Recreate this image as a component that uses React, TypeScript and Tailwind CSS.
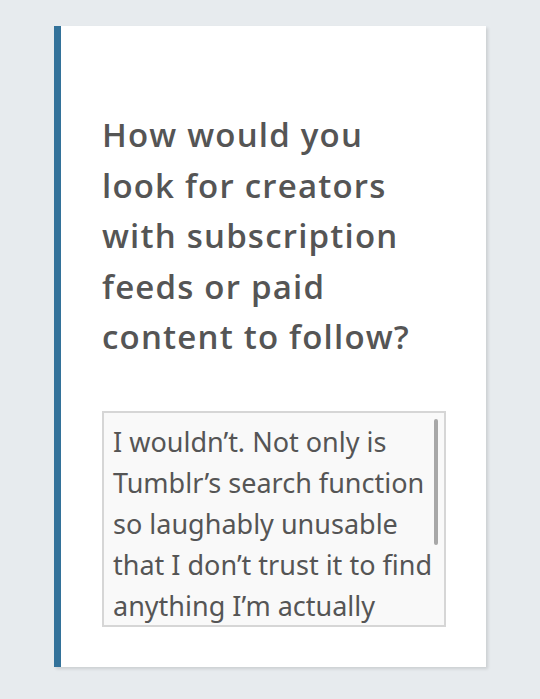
import React from 'react';

const answer =
  'I wouldn’t. Not only is Tumblr’s search function so laughably unusable that I don’t trust it to find anything I’m actually looking for, but I also have no interest in paying for content on a site like this.';

const App: React.FC = () => {
  return (
    <div className="min-h-[699px] w-[540px] bg-[#e7ebee] pt-[26px]">
      {/* Question card */}
      <div className="ml-[54px] h-[641px] w-[432px] border-l-[7px] border-[#33729a] bg-white pl-[41px] pr-[16px] pt-[84px] shadow-[2px_2px_3px_rgba(0,0,0,0.12)]">
        <h2 className="font-['Open_Sans',sans-serif] text-[33px] font-semibold leading-[50.5px] tracking-[1.2px] text-[#555]">
          How would you
          <br />
          look for creators
          <br />
          with subscription
          <br />
          feeds or paid
          <br />
          content to follow?
        </h2>

        {/* Answer box, scrolled to the top */}
        <div className="relative mt-[48px] h-[216px] w-[344px] overflow-hidden border-2 border-[#d6d6d6] bg-[#f9f9f9]">
          <p className="pl-[9px] pr-[4px] pt-[8px] font-['Noto_Sans',sans-serif] text-[27px] leading-[41px] text-[#555]">
            {answer}
          </p>
          <div className="absolute right-[6px] top-[6px] h-[126px] w-[4px] rounded-full bg-[#a8a8a8]" />
        </div>
      </div>
    </div>
  );
};

export default App;
